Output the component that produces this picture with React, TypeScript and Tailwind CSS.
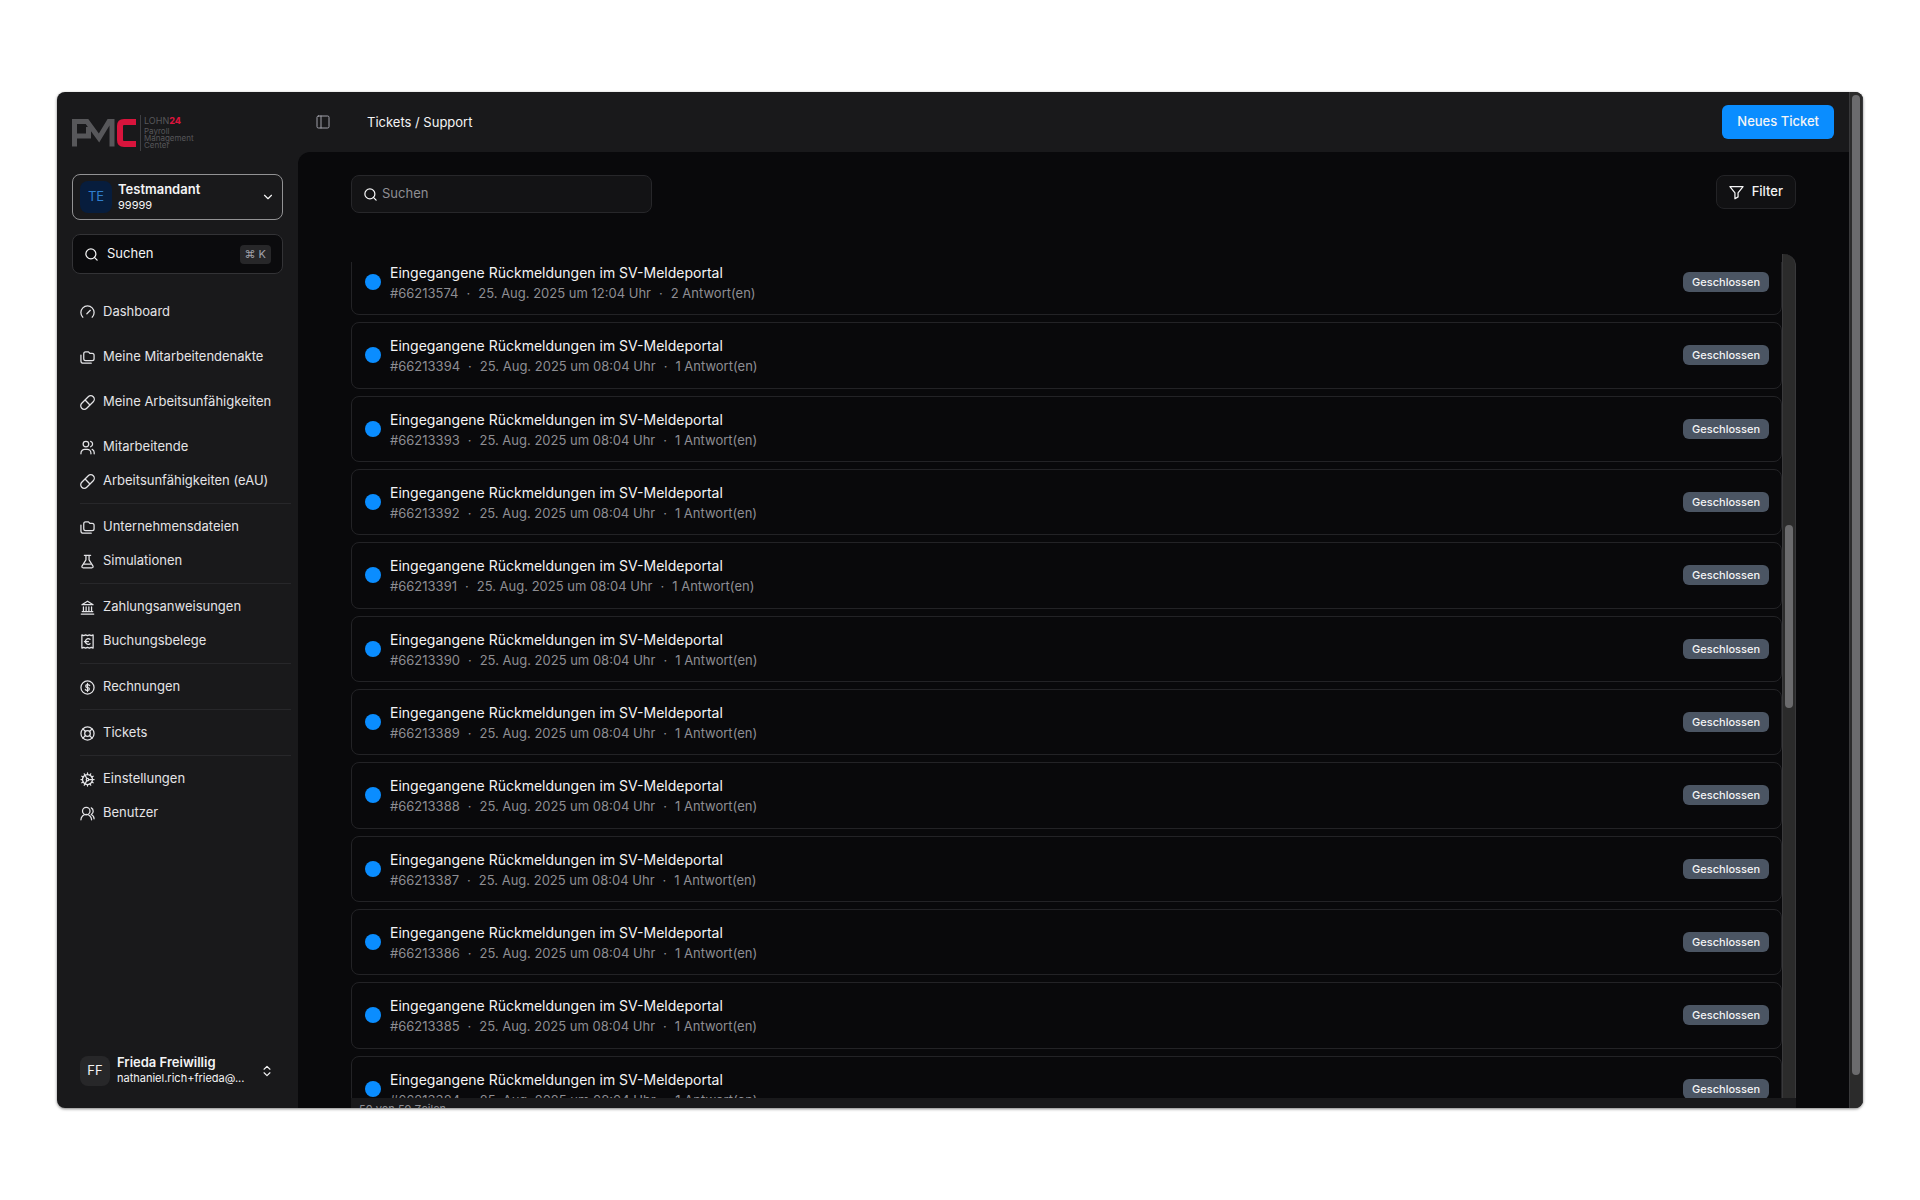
import type { ReactNode } from "react";
import { ChevronDown, ChevronsUpDown, PanelLeft, Search } from "lucide-react";

interface NavItem {
  label: string;
  icon: ReactNode;
}

interface NavGroup {
  items: NavItem[];
  divider?: boolean;
}

interface Ticket {
  id: string;
  time: string;
  replies: number;
}

const Stroke = ({ children }: { children: ReactNode }) => (
  <svg
    viewBox="0 0 24 24"
    className="size-[15px] shrink-0"
    fill="none"
    stroke="currentColor"
    strokeWidth="2"
    strokeLinecap="round"
    strokeLinejoin="round"
    aria-hidden="true"
  >
    {children}
  </svg>
);

const DashboardIcon = () => (
  <Stroke>
    <path d="M4.500 19.500a10.600 10.600 0 1 1 15 0" />
    <path d="m11 14 5.500-5.500" />
  </Stroke>
);

const FoldersIcon = () => (
  <Stroke>
    <path d="M9 17h10.500a3 3 0 0 0 3-3V8.500a3 3 0 0 0-3-3H16L13.500 3H9a3 3 0 0 0-3 3v8a3 3 0 0 0 3 3Z" />
    <path d="M1.500 8v9.500A3.500 3.500 0 0 0 5 21h13" />
  </Stroke>
);

const PillIcon = () => (
  <Stroke>
    <path d="m10.800 21.200 10.400-10.400a5.600 5.600 0 1 0-8-8L2.800 13.200a5.600 5.600 0 1 0 8 8Z" />
    <path d="m8.500 8.500 7 7" />
  </Stroke>
);

const UsersIcon = () => (
  <Stroke>
    <circle cx="9.500" cy="6.500" r="4.500" />
    <path d="M1.500 22v-1a6 6 0 0 1 6-6h4a6 6 0 0 1 6 6v1" />
    <path d="M17 2.200a4.500 4.500 0 0 1 0 8.600" />
    <path d="M19.500 15a5.500 5.500 0 0 1 3.200 5v2" />
  </Stroke>
);

const FlaskIcon = () => (
  <Stroke>
    <path d="M7 2h10M9.500 2v7.500L3.200 19.500A1.700 1.700 0 0 0 4.600 22h14.800a1.700 1.700 0 0 0 1.400-2.500L14.500 9.500V2" />
    <path d="M6.500 16h11" />
  </Stroke>
);

const BankIcon = () => (
  <Stroke>
    <path d="M3 7.500 12 2l9 5.500Z" />
    <path d="M5.500 11v7M9.800 11v7M14.200 11v7M18.500 11v7M3.500 18.500h17M2 22.500h20" />
  </Stroke>
);

const ReceiptIcon = () => (
  <Stroke>
    <path d="M3 1.500l3 1.200 3-1.200 3 1.200 3-1.200 3 1.200 3-1.200v21l-3-1.200-3 1.200-3-1.200-3 1.200-3-1.200-3 1.200Z" />
    <path d="M16 8.500a4.500 4.500 0 1 0 0 7M7 12h6.500" />
  </Stroke>
);

const DollarIcon = () => (
  <Stroke>
    <circle cx="12" cy="12" r="10.500" />
    <path d="M15.500 9a3 2.200 0 0 0-3-1.700h-1a2.300 2.300 0 0 0 0 4.700h1a2.300 2.300 0 0 1 0 4.700h-1a3 2.200 0 0 1-3-1.700M12 5.500v13" />
  </Stroke>
);

const LifebuoyIcon = () => (
  <Stroke>
    <circle cx="12" cy="12" r="10.500" />
    <circle cx="12" cy="12" r="4.500" />
    <path d="m4.600 4.600 4.200 4.200M15.200 15.200l4.200 4.200M19.400 4.600l-4.200 4.200M8.800 15.200l-4.200 4.200" />
  </Stroke>
);

const GearIcon = () => (
  <Stroke>
    <circle cx="12" cy="12" r="8" />
    <circle cx="12" cy="12" r="2" />
    <path d="M12 1.500V4M12 20v2.500M22.500 12H14M4 12H1.500M17.200 2.900 16 5M8 19l-1.200 2.100M21.100 6.800 19 8M5 16l-2.100 1.200M21.100 17.200 19 16M5 8 2.900 6.800M17.200 21.100 16 19M11 10.300 8 5l-1.200-2.100M11 13.700 8 19" />
  </Stroke>
);

const UserGroupIcon = () => (
  <Stroke>
    <circle cx="10" cy="8" r="6" />
    <path d="M1.500 22a8.500 8.500 0 0 1 17 0" />
    <path d="M18 3a6 6 0 0 1 0 10.500c3 1.500 4.500 4 4.500 7" />
  </Stroke>
);

const FunnelIcon = () => (
  <Stroke>
    <path d="M1.500 2.500h21l-8 10v6.500l-5 3V12.500Z" />
  </Stroke>
);

const navGroups: NavGroup[] = [
  { items: [{ label: "Dashboard", icon: <DashboardIcon /> }] },
  { items: [{ label: "Meine Mitarbeitendenakte", icon: <FoldersIcon /> }] },
  { items: [{ label: "Meine Arbeitsunfähigkeiten", icon: <PillIcon /> }] },
  {
    items: [
      { label: "Mitarbeitende", icon: <UsersIcon /> },
      { label: "Arbeitsunfähigkeiten (eAU)", icon: <PillIcon /> },
    ],
  },
  {
    divider: true,
    items: [
      { label: "Unternehmensdateien", icon: <FoldersIcon /> },
      { label: "Simulationen", icon: <FlaskIcon /> },
    ],
  },
  {
    divider: true,
    items: [
      { label: "Zahlungsanweisungen", icon: <BankIcon /> },
      { label: "Buchungsbelege", icon: <ReceiptIcon /> },
    ],
  },
  { divider: true, items: [{ label: "Rechnungen", icon: <DollarIcon /> }] },
  { divider: true, items: [{ label: "Tickets", icon: <LifebuoyIcon /> }] },
  {
    divider: true,
    items: [
      { label: "Einstellungen", icon: <GearIcon /> },
      { label: "Benutzer", icon: <UserGroupIcon /> },
    ],
  },
];

const tickets: Ticket[] = [
  { id: "66213574", time: "12:04", replies: 2 },
  { id: "66213394", time: "08:04", replies: 1 },
  { id: "66213393", time: "08:04", replies: 1 },
  { id: "66213392", time: "08:04", replies: 1 },
  { id: "66213391", time: "08:04", replies: 1 },
  { id: "66213390", time: "08:04", replies: 1 },
  { id: "66213389", time: "08:04", replies: 1 },
  { id: "66213388", time: "08:04", replies: 1 },
  { id: "66213387", time: "08:04", replies: 1 },
  { id: "66213386", time: "08:04", replies: 1 },
  { id: "66213385", time: "08:04", replies: 1 },
  { id: "66213384", time: "08:04", replies: 1 },
];

const Logo = () => (
  <svg viewBox="0 0 124 36" className="h-9 w-[124px]" role="img" aria-label="PMC Lohn24">
    <g fill="none" strokeWidth="5">
      <path d="M2.500 31.500V6.500H15L27 23 37 6.500h3v25" stroke="#57575a" />
      <path d="M2.500 21H16.500V12" stroke="#57575a" />
      <path d="M64 7H52q-4 0-4 4v14q0 4 4 4h12" stroke="#d8143c" strokeWidth="6" />
    </g>
    <path d="M68.500 0v36" stroke="#3f3f42" />
    <g fontFamily="Inter, sans-serif" fill="#57575a">
      <text x="72" y="9" fontSize="9">
        LOHN<tspan fill="#d8143c" fontWeight="800">24</tspan>
      </text>
      <text x="72" y="19" fontSize="8">Payroll</text>
      <text x="72" y="26" fontSize="8">Management</text>
      <text x="72" y="33" fontSize="8">Center</text>
    </g>
  </svg>
);

const Sidebar = () => (
  <aside className="flex w-[241px] shrink-0 flex-col">
    <div className="px-[15px] pt-[23px]">
      <Logo />
      <button className="mt-[23px] flex h-[46px] w-full items-center rounded-lg border border-[#929294] px-[7px] text-left">
        <span className="flex size-8 shrink-0 items-center justify-center rounded-lg bg-[#071d3d] text-[13px] text-[#2f7fd0]">
          TE
        </span>
        <span className="ml-1.5 flex-1">
          <span className="block text-[13px] leading-[15px] font-semibold">Testmandant</span>
          <span className="block text-[11px] leading-4">99999</span>
        </span>
        <ChevronDown className="size-3.5" />
      </button>
      <button className="mt-3.5 flex h-10 w-full items-center rounded-lg border border-[#333336] bg-[#0b0b0d] px-[11px] text-[13px]">
        <Search className="size-[15px]" />
        <span className="ml-2 flex-1 text-left">Suchen</span>
        <kbd className="rounded bg-[#272729] px-[5px] font-[Inter] text-[11px] leading-[19px] text-[#a1a1aa]">
          ⌘ K
        </kbd>
      </button>
    </div>

    <nav className="mt-[21px] pr-[7px] pl-[23px]">
      {navGroups.map((group, index) => (
        <div
          key={index}
          className={index === 0 ? "" : group.divider ? "mt-[5px] border-t border-[#27272a] pt-1.5" : "mt-[11px]"}
        >
          {group.items.map((item) => (
            <a key={item.label} href="#" className="flex h-[34px] items-center gap-2 text-[13px] text-[#e4e4e7]">
              {item.icon}
              <span>{item.label}</span>
            </a>
          ))}
        </div>
      ))}
    </nav>

    <button className="mt-auto mb-[22px] flex items-center pr-6 pl-[23px] text-left">
      <span className="flex size-[30px] shrink-0 items-center justify-center rounded-lg bg-[#272729] text-[13px]">FF</span>
      <span className="ml-[7px] min-w-0">
        <span className="block text-[13px] leading-[15px] font-semibold">Frieda Freiwillig</span>
        <span className="block text-[11px] leading-4">nathaniel.rich+frieda@...</span>
      </span>
      <ChevronsUpDown className="ml-auto size-3.5 shrink-0" />
    </button>
  </aside>
);

const TicketRow = ({ ticket }: { ticket: Ticket }) => (
  <li className="flex items-center rounded-lg border border-[#232326] pr-3 pl-[13px]">
    <span className="size-4 shrink-0 rounded-full bg-[#0a8dff]" />
    <div className="ml-[9px] flex-1 pt-0.5">
      <h3 className="text-sm leading-5 text-[#f4f4f5]">Eingegangene Rückmeldungen im SV-Meldeportal</h3>
      <p className="flex gap-2 text-[13px] leading-5 text-[#8e8e93]">
        <span>#{ticket.id}</span>
        <span>·</span>
        <span>25. Aug. 2025 um {ticket.time} Uhr</span>
        <span>·</span>
        <span>{ticket.replies} Antwort(en)</span>
      </p>
    </div>
    <span className="rounded-md bg-[#4b5563] px-[9px] text-[11px] leading-5 font-medium text-[#f4f4f5]">
      Geschlossen
    </span>
  </li>
);

export default function App() {
  return (
    <div className="flex h-screen bg-white px-[57px] py-[92px] font-[Inter,sans-serif] text-[#f4f4f5]">
      <div className="flex min-w-0 flex-1 overflow-hidden rounded-lg bg-[#19191b] shadow-[0_1px_3px_rgba(0,0,0,0.5)]">
        <Sidebar />

        <div className="flex min-w-0 flex-1 flex-col">
          <header className="flex h-[60px] shrink-0 items-center pr-[15px] pl-[17px]">
            <button aria-label="Seitenleiste umschalten" className="text-[#a1a1aa]">
              <PanelLeft className="size-4" strokeWidth={1.5} />
            </button>
            <h1 className="ml-9 flex-1 pt-0.5 text-[13px]">Tickets / Support</h1>
            <button className="h-[34px] rounded-md bg-[#0a8dff] px-[15px] text-[13px] font-medium">Neues Ticket</button>
          </header>

          <main className="flex min-h-0 flex-1 flex-col rounded-tl-xl bg-[#09090b] px-[53px]">
            <div className="flex items-start justify-between pt-[23px]">
              <label className="flex h-[38px] w-[301px] items-center rounded-lg border border-[#27272a] bg-[#131315] px-[11px]">
                <Search className="size-[15px]" />
                <input
                  type="text"
                  aria-label="Suchen"
                  placeholder="Suchen"
                  className="ml-1 min-w-0 flex-1 bg-transparent text-[13px] outline-none placeholder:text-[#8e8e93]"
                />
              </label>
              <button className="flex h-[34px] items-center gap-2 rounded-lg border border-[#232326] bg-[#111113] px-3 text-[13px] font-medium">
                <FunnelIcon />
                Filter
              </button>
            </div>

            <div className="mt-[41px] flex min-h-0 flex-1">
              <div className="mt-2 min-w-0 flex-1 overflow-hidden">
                <ul className="-mt-[13px] grid h-[873px] auto-rows-fr gap-[7px]">
                  {tickets.map((ticket) => (
                    <TicketRow key={ticket.id} ticket={ticket} />
                  ))}
                </ul>
              </div>
              <div className="w-3.5 rounded-tr-xl border-x border-[#39393b] bg-[#2b2b2b] pt-[271px]">
                <div className="mx-auto h-[183px] w-2 rounded-full bg-[#6b6b6d]" />
              </div>
            </div>
            <footer className="h-[10px] shrink-0 overflow-hidden bg-[#19191b] pt-[3px] pl-2 text-[11px] leading-4 text-[#8e8e93]">
              50 von 59 Zeilen
            </footer>
          </main>
        </div>

        <div className="w-3.5 shrink-0 border-x border-[#39393b] bg-[#2b2b2b] pt-[3px] pb-[33px]">
          <div className="mx-auto h-full w-2 rounded-full bg-[#6b6b6d]" />
        </div>
      </div>
    </div>
  );
}
